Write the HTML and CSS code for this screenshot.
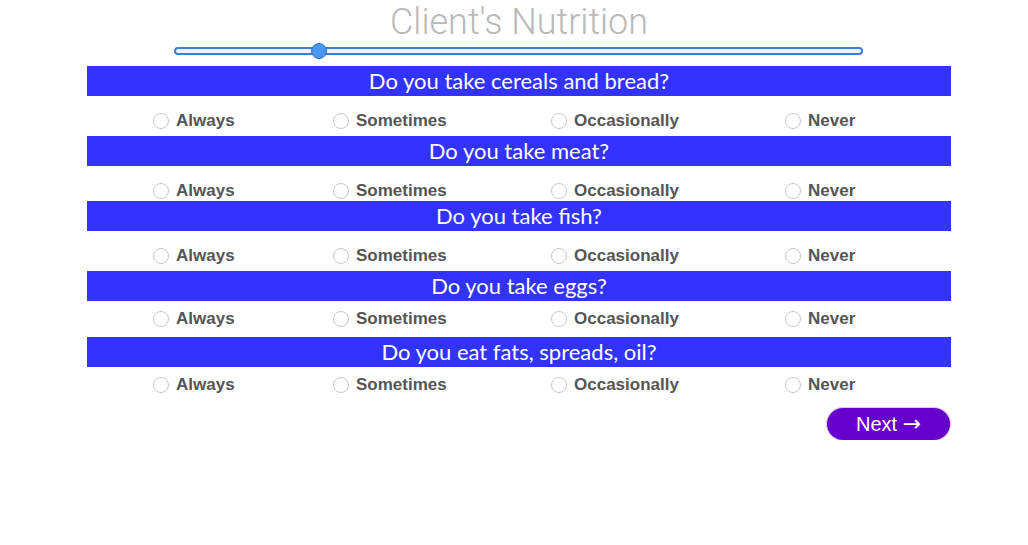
FILE: index.html
```html
<!DOCTYPE html>
<html>
<head>
<meta charset="utf-8">
<title>Client's Nutrition</title>
<link rel="stylesheet" href="styles.css">
</head>
<body>
<main class="page">
  <h1 class="title">Client's Nutrition</h1>
  <div class="slider">
    <div class="track"></div>
    <div class="thumb"></div>
  </div>

  <section class="question">
    <h2 class="q-bar">Do you take cereals and bread?</h2>
    <div class="options">
      <label class="opt"><span class="radio"></span>Always</label>
      <label class="opt"><span class="radio"></span>Sometimes</label>
      <label class="opt"><span class="radio"></span>Occasionally</label>
      <label class="opt"><span class="radio"></span>Never</label>
    </div>
  </section>

  <section class="question q2">
    <h2 class="q-bar">Do you take meat?</h2>
    <div class="options">
      <label class="opt"><span class="radio"></span>Always</label>
      <label class="opt"><span class="radio"></span>Sometimes</label>
      <label class="opt"><span class="radio"></span>Occasionally</label>
      <label class="opt"><span class="radio"></span>Never</label>
    </div>
  </section>

  <section class="question q3">
    <h2 class="q-bar">Do you take fish?</h2>
    <div class="options">
      <label class="opt"><span class="radio"></span>Always</label>
      <label class="opt"><span class="radio"></span>Sometimes</label>
      <label class="opt"><span class="radio"></span>Occasionally</label>
      <label class="opt"><span class="radio"></span>Never</label>
    </div>
  </section>

  <section class="question q4">
    <h2 class="q-bar">Do you take eggs?</h2>
    <div class="options tight">
      <label class="opt"><span class="radio"></span>Always</label>
      <label class="opt"><span class="radio"></span>Sometimes</label>
      <label class="opt"><span class="radio"></span>Occasionally</label>
      <label class="opt"><span class="radio"></span>Never</label>
    </div>
  </section>

  <section class="question q5">
    <h2 class="q-bar">Do you eat fats, spreads, oil?</h2>
    <div class="options tight">
      <label class="opt"><span class="radio"></span>Always</label>
      <label class="opt"><span class="radio"></span>Sometimes</label>
      <label class="opt"><span class="radio"></span>Occasionally</label>
      <label class="opt"><span class="radio"></span>Never</label>
    </div>
  </section>

  <div class="actions">
    <button class="next">Next <span class="arrow">&rarr;</span></button>
  </div>
</main>
</body>
</html>
```
FILE: styles.css
```css
html, body {
  margin: 0;
  background: #ffffff;
}
body {
  padding-left: 10px;
}
.page {
  width: 864px;
  margin: 0 auto;
}
.title {
  margin: 0;
  font-family: Roboto, "Liberation Sans", sans-serif;
  font-weight: 300;
  font-size: 36px;
  line-height: 44px;
  color: #b9b9b9;
  text-align: center;
}
.slider {
  position: relative;
  width: 689px;
  height: 16px;
  margin: -1px auto 0;
  display: flex;
  align-items: center;
  transform: translateX(-1px);
}
.track {
  width: 100%;
  height: 4px;
  border: 2px solid #3b7dd8;
  border-radius: 4px;
  background: #eef3fb;
  box-sizing: content-box;
}
.thumb {
  position: absolute;
  left: 137px;
  top: 0;
  width: 14px;
  height: 14px;
  border-radius: 50%;
  background: #4c97ef;
  border: 1px solid #2f6fc4;
}
.question {
  margin-top: 7px;
}
.q2 { margin-top: 5px; }
.q3 { margin-top: 0; }
.q4 { margin-top: 5px; }
.q5 { margin-top: 8px; }
.q-bar {
  margin: 0;
  height: 30px;
  line-height: 30px;
  background: #3333ff;
  color: #ffffff;
  text-align: center;
  font-family: Lato, "Open Sans", sans-serif;
  font-weight: 400;
  font-size: 22px;
}
.options {
  display: grid;
  grid-template-columns: 180px 218px 234px auto;
  padding-left: 66px;
  margin-top: 15px;
  height: 20px;
  align-items: center;
}
.options.tight {
  margin-top: 8px;
}
.opt {
  display: flex;
  align-items: center;
  gap: 7px;
  font-family: "Liberation Sans", Arial, sans-serif;
  font-weight: 700;
  font-size: 17px;
  color: #555555;
}
.radio {
  width: 14px;
  height: 14px;
  border: 1px solid #c8c8c8;
  border-radius: 50%;
  background: #ffffff;
  flex: none;
}
.actions {
  display: flex;
  justify-content: flex-end;
  margin-top: 13px;
}
.next {
  width: 123px;
  height: 32px;
  border: none;
  border-radius: 16px;
  background: #6600cc;
  color: #ffffff;
  font-family: "Liberation Sans", Arial, sans-serif;
  font-size: 20px;
  line-height: 32px;
  padding: 0;
  margin-right: 1px;
  box-shadow: 0 0 0 1px #d9c7ef;
}
.arrow {
  font-family: "DejaVu Sans", sans-serif;
  font-size: 22px;
}
```
